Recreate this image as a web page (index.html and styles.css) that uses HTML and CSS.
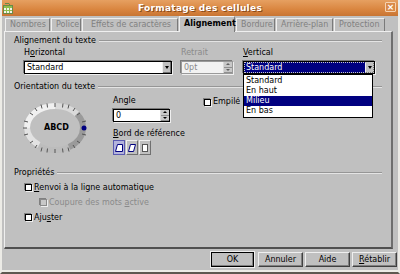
FILE: index.html
```html
<!DOCTYPE html>
<html lang="fr">
  <head>
    <meta charset="UTF-8" />
    <title>Formatage des cellules</title>
    <link rel="stylesheet" href="styles.css">
  </head>
  <body>
    <div class="window">
      <header class="titlebar">
        <svg class="app-icon" width="10" height="11" viewBox="0 0 10 11">
          <rect x="0.5" y="2.5" width="9" height="8" fill="#f4f4ec" stroke="#6a8a4a"/>
          <rect x="1" y="3" width="8" height="2" fill="#8fbf4f"/>
          <path d="M3.5 5v5M6.5 5v5M1 7.5h8" stroke="#8fbf4f" stroke-width="1"/>
          <path d="M2 0.5h4l1 2" stroke="#6a8a4a" fill="none"/>
        </svg>
        <span class="title">Formatage des cellules</span>
        <span class="close">×</span>
      </header>

      <nav class="tabs">
        <span class="tab t-nombres">Nombres</span>
        <span class="tab t-police">Police</span>
        <span class="tab t-effets">Effets de caractères</span>
        <span class="tab active">Alignement</span>
        <span class="tab t-bordure">Bordure</span>
        <span class="tab t-arriere">Arrière-plan</span>
        <span class="tab t-protection">Protection</span>
      </nav>

      <main class="panel">
        <section class="group">
          <h2 class="legend"><span>Alignement du texte</span></h2>
          <div class="align-row">
            <div class="field f-horizontal">
              <label>H<u>o</u>rizontal</label>
              <div class="select">
                <span class="value">Standard</span>
                <span class="drop"><i></i></span>
              </div>
            </div>
            <div class="field f-retrait">
              <label class="disabled">Retrait</label>
              <div class="spin disabled">
                <span class="value">0pt</span>
                <span class="arrows"><i class="up"></i><i class="down"></i></span>
              </div>
            </div>
            <div class="field f-vertical">
              <label><u>V</u>ertical</label>
              <div class="select focused">
                <span class="value">Standard</span>
                <span class="drop"><i></i></span>
              </div>
              <ul class="droplist">
                <li>Standard</li>
                <li>En haut</li>
                <li class="hl">Milieu</li>
                <li>En bas</li>
              </ul>
            </div>
          </div>
        </section>

        <section class="group">
          <h2 class="legend"><span>Orientation du texte</span></h2>
          <div class="orient-row">
            <div class="dial">
              <svg width="84" height="60" viewBox="0 0 84 60">
                <ellipse cx="41" cy="35" rx="28" ry="22" fill="none" stroke="#bcbcbc" stroke-width="6"/>
                <path d="M13 35a28 22 0 0 1 28 -22" fill="none" stroke="#f0f0f0" stroke-width="6"/>
                <path d="M41 13a28 22 0 0 1 22 8" fill="none" stroke="#dadada" stroke-width="6"/>
                <path d="M13 35a28 22 0 0 0 12 17" fill="none" stroke="#e2e2e2" stroke-width="6"/>
                <path d="M63 21a28 22 0 0 1 6 14a28 22 0 0 1 -14 19" fill="none" stroke="#9a9a9a" stroke-width="6"/>
                <g stroke="#555" stroke-width="1">
                  <path d="M41 10v4M41 56v4"/>
                  <path d="M27 11.5l1 4M55 11.5l-1 4M27 58.5l1 -4M55 58.5l-1 -4"/>
                  <path d="M16 20l3 2M66 20l-3 2M16 50l3 -2M66 50l-3 -2"/>
                  <path d="M10 28l4 1M72 28l-4 1M10 42l4 -1M72 42l-4 -1"/>
                  <path d="M9 35h4"/>
                  <path d="M33 10.5l0.5 4M49 10.5l-0.5 4M33 59.5l0.5 -4M49 59.5l-0.5 -4"/>
                  <path d="M21 15l2 3M61 15l-2 3M21 55l2 -3M61 55l-2 -3"/>
                </g>
                <circle cx="70" cy="35" r="2.5" fill="#000080"/>
              </svg>
              <span class="abcd">ABCD</span>
            </div>
            <div class="angle-col">
              <label>Angle</label>
              <div class="spin angle">
                <span class="value">0</span>
                <span class="arrows"><i class="up"></i><i class="down"></i></span>
              </div>
              <label class="bord"><u>B</u>ord de référence</label>
              <div class="refs">
                <span class="ref selected">
                  <svg width="8" height="8" viewBox="0 0 8 8"><path d="M2.5 0.5h5v7h-7z" fill="#fff" stroke="#000080"/></svg>
                </span>
                <span class="ref">
                  <svg width="8" height="8" viewBox="0 0 8 8"><path d="M2.5 0.5h5l-2 7h-5z" fill="#fff" stroke="#000080"/></svg>
                </span>
                <span class="ref">
                  <svg width="8" height="8" viewBox="0 0 8 8"><rect x="1.5" y="0.5" width="5" height="7" fill="#fff" stroke="#555"/></svg>
                </span>
              </div>
            </div>
            <label class="check empile"><span class="box"></span><span class="cut">Empilé verticalement</span></label>
          </div>
        </section>

        <section class="group">
          <h2 class="legend"><span>Propriétés</span></h2>
          <div class="checks">
            <label class="check"><span class="box"></span><span><u>R</u>envoi à la ligne automatique</span></label>
            <label class="check sub disabled"><span class="box"></span><span>Coupure des mots <u>a</u>ctive</span></label>
            <label class="check"><span class="box"></span><span>Aju<u>s</u>ter</span></label>
          </div>
        </section>
      </main>

      <footer class="buttons">
        <button>OK</button>
        <button>Annuler</button>
        <button>Aide</button>
        <button><u>R</u>établir</button>
      </footer>
    </div>
  </body>
</html>
```

FILE: styles.css
```css
body {
  margin: 0;
  padding: 0;
  background: #c0c0c0;
}

.window {
  width: 400px;
  height: 274px;
  box-sizing: border-box;
  background: #c0c0c0;
  border-left: 2px solid #ecebe6;
  border-right: 2px solid #ecebe6;
  border-bottom: 2px solid #5e5850;
  box-shadow: inset 0 -2px 0 #ecebe6;
  font-family: "DejaVu Sans", sans-serif;
  font-size: 8px;
  line-height: 10px;
  color: #000;
  overflow: hidden;
}

u {
  text-decoration: underline;
  text-underline-offset: 1px;
}

/* title bar */
.titlebar {
  position: relative;
  margin: 0 -2px;
  height: 16px;
  display: flex;
  align-items: center;
  justify-content: center;
  background: linear-gradient(#e6a061, #d9853f 60%, #c87533);
}

.app-icon {
  position: absolute;
  left: 3px;
  top: 3px;
}

.title {
  color: #fff;
  font-weight: bold;
  font-size: 9px;
  letter-spacing: 0.3px;
  text-shadow: 1px 1px 0 #8a4a1a;
}

.close {
  position: absolute;
  right: 4px;
  top: 2px;
  width: 11px;
  height: 10px;
  box-sizing: border-box;
  border: 1px solid #f6d2b0;
  border-radius: 1px;
  background: #d98a48;
  color: #fff;
  font-size: 9px;
  line-height: 8px;
  text-align: center;
  font-weight: bold;
}

/* tabs */
.tabs {
  display: flex;
  align-items: flex-end;
  gap: 1px;
  height: 15px;
  padding-left: 3px;
}

.tab {
  height: 13px;
  box-sizing: border-box;
  padding: 1px 4px 0;
  border: 1px solid #efefef;
  border-right-color: #7a7a7a;
  border-bottom: none;
  color: #808080;
  white-space: nowrap;
}

.t-nombres { width: 45px; }
.t-police { width: 30px; }
.t-effets { width: 96px; padding-left: 8px; }
.t-bordure { width: 39px; }
.t-arriere { width: 57px; }
.t-protection { width: 51px; }

.tab.active {
  height: 16px;
  width: 56px;
  padding-top: 2px;
  color: #000;
  font-weight: bold;
  background: #c0c0c0;
  margin-bottom: -1px;
  position: relative;
  z-index: 1;
}

/* main panel */
.panel {
  margin: 0 5px 0 2px;
  height: 218px;
  box-sizing: border-box;
  border: 1px solid #efefef;
  border-right: 2px solid #6e6e6e;
  border-bottom: 2px solid #505050;
  padding: 4px 9px 0 9px;
}

.legend {
  display: flex;
  align-items: center;
  gap: 3px;
  margin: 0;
  font-size: 8px;
  font-weight: normal;
  line-height: 10px;
}

.legend::after {
  content: "";
  flex: 1;
  height: 0;
  border-top: 1px solid #969696;
  border-bottom: 1px solid #e4e4e4;
}

/* alignment row */
.align-row {
  display: flex;
  padding: 2px 0 0 10px;
}

.field {
  display: flex;
  flex-direction: column;
  gap: 3px;
  position: relative;
}

.f-horizontal { width: 148px; }
.f-retrait { width: 62px; margin-left: 9px; }
.f-vertical { width: 132px; }

.disabled {
  color: #8a8a8a;
}

.select,
.spin {
  height: 13px;
  box-sizing: border-box;
  display: flex;
  align-items: center;
  background: #fff;
  border: 1px solid #000;
  box-shadow: 1px 1px 0 #efefef, -1px -1px 0 #7a7a7a;
}

.value {
  flex: 1;
  padding-left: 2px;
  white-space: nowrap;
}

.drop {
  width: 8px;
  height: 11px;
  background: #c0c0c0;
  border-left: 1px solid #efefef;
  box-shadow: inset -1px -1px 0 #707070;
  display: flex;
  align-items: center;
  justify-content: center;
}

.drop i {
  width: 0;
  height: 0;
  border-left: 2px solid transparent;
  border-right: 2px solid transparent;
  border-top: 3px solid #000;
}

.select.focused {
  background: #000080;
  outline: 1px dotted #c8c8c8;
  outline-offset: -2px;
}

.select.focused .value {
  color: #fff;
}

.spin.disabled {
  width: 52px;
  background: #f2f2f2;
  border-color: #9a9a9a;
}

.arrows {
  width: 8px;
  height: 11px;
  display: flex;
  flex-direction: column;
  border-left: 1px solid #d8d8d8;
}

.arrows i {
  flex: 1;
  background: #c8c8c8;
  border-bottom: 1px solid #909090;
  position: relative;
}

.arrows i::after {
  content: "";
  position: absolute;
  left: 2px;
  top: 1px;
  border-left: 2px solid transparent;
  border-right: 2px solid transparent;
}

.arrows .up::after { border-bottom: 2px solid #606060; }
.arrows .down::after { border-top: 2px solid #606060; }

.spin.angle .arrows .up::after { border-bottom-color: #000; }
.spin.angle .arrows .down::after { border-top-color: #000; }

.droplist {
  position: absolute;
  top: 26px;
  left: 0;
  width: 130px;
  box-sizing: border-box;
  margin: 0;
  padding: 1px 0;
  list-style: none;
  background: #fff;
  border: 1px solid #000;
  z-index: 2;
}

.droplist li {
  height: 10px;
  padding-left: 2px;
  line-height: 10px;
}

.droplist .hl {
  background: #000080;
  color: #fff;
}

/* orientation */
.group + .group {
  margin-top: 8px;
}

.orient-row {
  display: flex;
  height: 68px;
}

.dial {
  position: relative;
  width: 99px;
  margin-top: 1px;
}

.dial svg {
  display: block;
}

.abcd {
  position: absolute;
  left: 30px;
  top: 30px;
  font-weight: bold;
  font-size: 8px;
}

.angle-col {
  display: flex;
  flex-direction: column;
  width: 89px;
  padding-top: 4px;
}

.spin.angle {
  width: 57px;
  margin-top: 3px;
}

.bord {
  margin-top: 7px;
}

.refs {
  display: flex;
  gap: 1px;
  margin-top: 1px;
}

.ref {
  width: 12px;
  height: 15px;
  box-sizing: border-box;
  border: 1px solid #efefef;
  border-right-color: #707070;
  border-bottom-color: #707070;
  display: flex;
  align-items: center;
  justify-content: center;
}

.ref.selected {
  border: 1px solid #5a5ab0;
  background: #b4b4dc;
}

/* checkboxes */
.check {
  display: flex;
  align-items: center;
  gap: 2px;
  height: 15px;
  white-space: nowrap;
}

.box {
  flex: none;
  width: 7px;
  height: 7px;
  box-sizing: border-box;
  background: #fff;
  border: 1px solid #000;
  box-shadow: -1px -1px 0 #808080, 1px 1px 0 #efefef;
}

.empile {
  height: 10px;
  width: 38px;
  margin-top: 5px;
  margin-left: 2px;
}

.cut {
  overflow: hidden;
}

.checks {
  padding: 2px 0 0 11px;
}

.check.sub {
  padding-left: 15px;
}

.check.disabled .box {
  background: #c8c8c8;
  border-color: #8a8a8a;
}

/* dialog buttons */
.buttons {
  display: flex;
  justify-content: flex-end;
  gap: 2px;
  margin: 3px 0 0;
  padding-right: 1px;
}

button {
  width: 45px;
  height: 15px;
  padding: 0;
  font-family: "DejaVu Sans", sans-serif;
  font-size: 8px;
  color: #000;
  background: #c0c0c0;
  border: 1px solid #efefef;
  border-right-color: #404040;
  border-bottom-color: #404040;
  box-shadow: inset -1px -1px 0 #808080;
}

button:first-child {
  border: 1px solid #000;
  outline: 1px solid #efefef;
  width: 43px;
  margin-right: 2px;
}
```
